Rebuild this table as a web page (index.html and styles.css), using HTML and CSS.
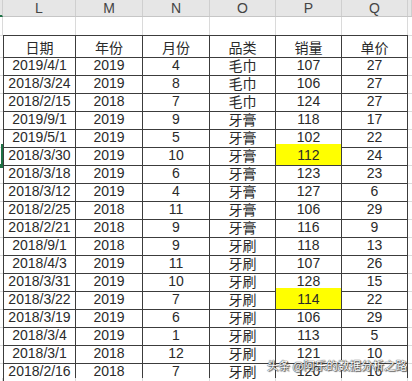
FILE: index.html
```html
<!DOCTYPE html>
<html lang="zh">
<head>
<meta charset="utf-8">
<link rel="stylesheet" href="styles.css">
</head>
<body>
<div class="sheet">
  <div class="row colhead">
    <div class="c k sel-head"></div>
    <div class="c">L</div><div class="c">M</div><div class="c">N</div><div class="c">O</div><div class="c">P</div><div class="c">Q</div>
    <div class="c r"></div>
  </div>
  <div class="row blank">
    <div class="c k"></div><div class="c"></div><div class="c"></div><div class="c"></div><div class="c"></div><div class="c"></div><div class="c"></div><div class="c r"></div>
  </div>
  <div class="data">
    <div class="row drow first"><div class="c k"></div><div class="c">日期</div><div class="c">年份</div><div class="c">月份</div><div class="c">品类</div><div class="c">销量</div><div class="c">单价</div><div class="c r"></div></div>
    <div class="row drow"><div class="c k"></div><div class="c">2019/4/1</div><div class="c">2019</div><div class="c">4</div><div class="c">毛巾</div><div class="c">107</div><div class="c">27</div><div class="c r"></div></div>
    <div class="row drow"><div class="c k"></div><div class="c">2018/3/24</div><div class="c">2019</div><div class="c">8</div><div class="c">毛巾</div><div class="c">106</div><div class="c">27</div><div class="c r"></div></div>
    <div class="row drow"><div class="c k"></div><div class="c">2018/2/15</div><div class="c">2018</div><div class="c">7</div><div class="c">毛巾</div><div class="c">124</div><div class="c">27</div><div class="c r"></div></div>
    <div class="row drow"><div class="c k"></div><div class="c">2019/9/1</div><div class="c">2019</div><div class="c">9</div><div class="c">牙膏</div><div class="c">118</div><div class="c">17</div><div class="c r"></div></div>
    <div class="row drow"><div class="c k"></div><div class="c">2019/5/1</div><div class="c">2019</div><div class="c">5</div><div class="c">牙膏</div><div class="c">102</div><div class="c">22</div><div class="c r"></div></div>
    <div class="row drow"><div class="c k sel"></div><div class="c">2018/3/30</div><div class="c">2019</div><div class="c">10</div><div class="c">牙膏</div><div class="c hl">112</div><div class="c">24</div><div class="c r"></div></div>
    <div class="row drow"><div class="c k"></div><div class="c">2018/3/18</div><div class="c">2019</div><div class="c">6</div><div class="c">牙膏</div><div class="c">123</div><div class="c">23</div><div class="c r"></div></div>
    <div class="row drow"><div class="c k"></div><div class="c">2018/3/12</div><div class="c">2019</div><div class="c">4</div><div class="c">牙膏</div><div class="c">127</div><div class="c">6</div><div class="c r"></div></div>
    <div class="row drow"><div class="c k"></div><div class="c">2018/2/25</div><div class="c">2018</div><div class="c">11</div><div class="c">牙膏</div><div class="c">106</div><div class="c">29</div><div class="c r"></div></div>
    <div class="row drow"><div class="c k"></div><div class="c">2018/2/21</div><div class="c">2018</div><div class="c">9</div><div class="c">牙膏</div><div class="c">116</div><div class="c">9</div><div class="c r"></div></div>
    <div class="row drow"><div class="c k"></div><div class="c">2018/9/1</div><div class="c">2018</div><div class="c">9</div><div class="c">牙刷</div><div class="c">118</div><div class="c">13</div><div class="c r"></div></div>
    <div class="row drow"><div class="c k"></div><div class="c">2018/4/3</div><div class="c">2019</div><div class="c">11</div><div class="c">牙刷</div><div class="c">107</div><div class="c">26</div><div class="c r"></div></div>
    <div class="row drow"><div class="c k"></div><div class="c">2018/3/31</div><div class="c">2019</div><div class="c">10</div><div class="c">牙刷</div><div class="c">128</div><div class="c">15</div><div class="c r"></div></div>
    <div class="row drow"><div class="c k"></div><div class="c">2018/3/22</div><div class="c">2019</div><div class="c">7</div><div class="c">牙刷</div><div class="c hl">114</div><div class="c">22</div><div class="c r"></div></div>
    <div class="row drow"><div class="c k"></div><div class="c">2018/3/19</div><div class="c">2019</div><div class="c">6</div><div class="c">牙刷</div><div class="c">106</div><div class="c">29</div><div class="c r"></div></div>
    <div class="row drow"><div class="c k"></div><div class="c">2018/3/4</div><div class="c">2019</div><div class="c">1</div><div class="c">牙刷</div><div class="c">113</div><div class="c">5</div><div class="c r"></div></div>
    <div class="row drow"><div class="c k"></div><div class="c">2018/3/1</div><div class="c">2018</div><div class="c">12</div><div class="c">牙刷</div><div class="c">121</div><div class="c">10</div><div class="c r"></div></div>
    <div class="row drow"><div class="c k"></div><div class="c">2018/2/16</div><div class="c">2018</div><div class="c">7</div><div class="c">牙刷</div><div class="c">120</div><div class="c">16</div><div class="c r"></div></div>
  </div>
  <div class="row blank tail">
    <div class="c k"></div><div class="c"></div><div class="c"></div><div class="c"></div><div class="c"></div><div class="c"></div><div class="c"></div><div class="c r"></div>
  </div>
  <div class="watermark">头条 @阿乐的数据分析之路</div>
</div>
</body>
</html>
```

FILE: styles.css
```css
html, body {
  margin: 0;
  padding: 0;
  background: #fff;
}
.sheet {
  position: relative;
  width: 412px;
  height: 381px;
  overflow: hidden;
  font-family: "Liberation Sans", Arial, "Noto Sans CJK SC", sans-serif;
  font-size: 14px;
  color: #2a2a2a;
}
.row {
  display: grid;
  grid-template-columns: 3px 73px 67px 67px 66px 66px 66px 4px;
  box-sizing: border-box;
}
.c {
  box-sizing: border-box;
  display: flex;
  align-items: center;
  justify-content: center;
  white-space: nowrap;
  position: relative;
}
.colhead {
  height: 17px;
  background: #e6e6e6;
  border-bottom: 1px solid #c6c6c6;
  color: #444;
  font-size: 14px;
}
.colhead .c {
  border-right: 1px solid #cfcfcf;
}
.colhead .sel-head {
  border-bottom: 2px solid #1e7145;
  margin-bottom: -1px;
}
.blank {
  height: 18px;
}
.blank .c {
  border-right: 1px solid #dadada;
}
.blank .c.r {
  border-right: none;
}
.data .drow {
  height: 18px;
}
.data .drow.first {
  height: 19px;
}
.data .drow .c {
  border-bottom: 1px solid #3c3c3c;
  border-right: 1px solid #3c3c3c;
  padding-top: 1px;
}
.data .drow.first .c {
  border-top: 1px solid #3c3c3c;
}
.data .drow .c.k {
  border-bottom: 1px solid #dadada;
  border-top-color: #dadada;
  border-right: none;
}
.data .drow .c.r {
  border-right: none;
  border-bottom: 1px solid #dadada;
  border-top-color: #dadada;
}
.data .drow .c.k + .c {
  border-left: 1px solid #3c3c3c;
}
.c.sel {
  border-right: 2px solid #1e7145 !important;
}
.c.sel::after {
  content: "";
  position: absolute;
  right: -3px;
  bottom: -3px;
  width: 4px;
  height: 4px;
  background: #1e7145;
}
.c.hl {
  background: #ffff00;
}
.tail {
  height: 10px;
}
.watermark {
  position: absolute;
  left: 267px;
  top: 357px;
  font-family: "Noto Sans CJK SC", sans-serif;
  font-size: 11.5px;
  line-height: 16px;
  color: #fff;
  text-shadow: 0 0 1px #333, 0 0 1px #333, 1px 1px 1px #555;
}
```
